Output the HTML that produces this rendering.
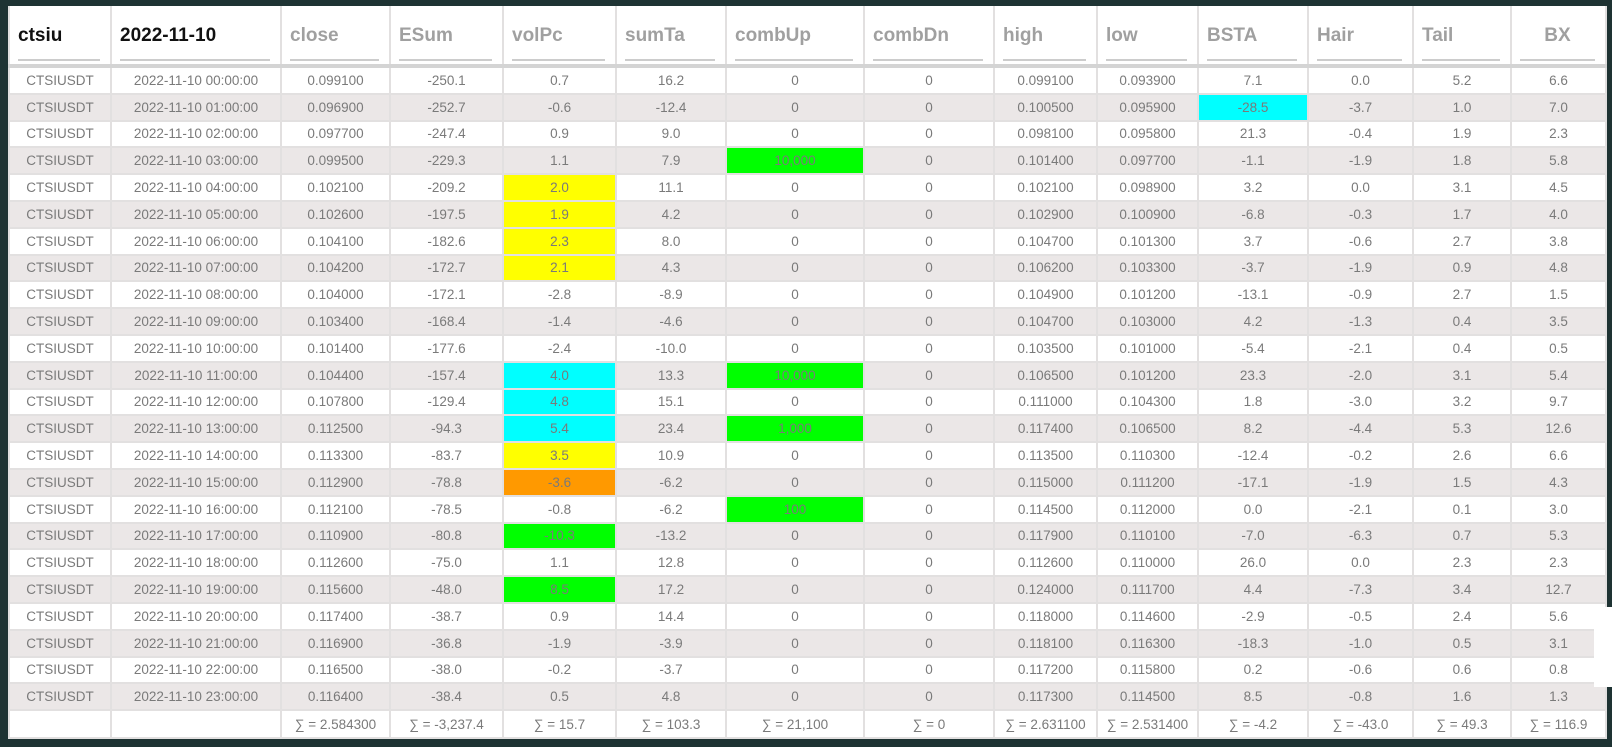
<!DOCTYPE html>
<html><head><meta charset="utf-8"><style>
html,body{margin:0;padding:0;background:#1e3333;width:1612px;height:747px;overflow:hidden;font-family:"Liberation Sans",sans-serif}
.wrap{position:absolute;left:8px;top:6px;width:1597px;background:#fff}
table{border-collapse:collapse;table-layout:fixed;width:1597px}
td,th{border:2px solid #e2e0e0;text-align:center;font-size:13.5px;color:#7a7a7a;padding:0;height:24.8px;white-space:nowrap;overflow:hidden}
th{height:58px;border-bottom:4px solid #d4d4d4;border-top:none;font-size:19px;color:#a0a0a0;font-weight:bold;vertical-align:top}
th div{margin:19px 10px 0 8px;border-bottom:2px solid #ccc;padding-bottom:12px;text-align:left;padding-left:0}
th.b{color:#111}
th.c div{text-align:center}
tbody tr:nth-child(even) td{background:#ebe7e7}
tfoot td{height:26px;background:#fff}
td.y{background:#ffff00!important}td.c{background:#00ffff!important}td.g{background:#00ff00!important}td.o{background:#ff9900!important}
.top{position:absolute;top:0;left:0;width:1612px;height:6px;background:#1e3333}
.patch{position:absolute;left:1594px;top:607px;width:18px;height:80px;background:#fff}
</style></head><body>
<div class="wrap"><table>
<colgroup><col style="width:102px"><col style="width:170px"><col style="width:109px"><col style="width:113px"><col style="width:113px"><col style="width:110px"><col style="width:138px"><col style="width:130px"><col style="width:103px"><col style="width:101px"><col style="width:110px"><col style="width:105px"><col style="width:98px"><col style="width:95px"></colgroup>
<thead><tr><th class="b"><div>ctsiu</div></th><th class="b"><div>2022-11-10</div></th><th><div>close</div></th><th><div>ESum</div></th><th><div>volPc</div></th><th><div>sumTa</div></th><th><div>combUp</div></th><th><div>combDn</div></th><th><div>high</div></th><th><div>low</div></th><th><div>BSTA</div></th><th><div>Hair</div></th><th><div>Tail</div></th><th class="c"><div>BX</div></th></tr></thead>
<tbody>
<tr><td>CTSIUSDT</td><td>2022-11-10 00:00:00</td><td>0.099100</td><td>-250.1</td><td>0.7</td><td>16.2</td><td>0</td><td>0</td><td>0.099100</td><td>0.093900</td><td>7.1</td><td>0.0</td><td>5.2</td><td>6.6</td></tr>
<tr><td>CTSIUSDT</td><td>2022-11-10 01:00:00</td><td>0.096900</td><td>-252.7</td><td>-0.6</td><td>-12.4</td><td>0</td><td>0</td><td>0.100500</td><td>0.095900</td><td class="c">-28.5</td><td>-3.7</td><td>1.0</td><td>7.0</td></tr>
<tr><td>CTSIUSDT</td><td>2022-11-10 02:00:00</td><td>0.097700</td><td>-247.4</td><td>0.9</td><td>9.0</td><td>0</td><td>0</td><td>0.098100</td><td>0.095800</td><td>21.3</td><td>-0.4</td><td>1.9</td><td>2.3</td></tr>
<tr><td>CTSIUSDT</td><td>2022-11-10 03:00:00</td><td>0.099500</td><td>-229.3</td><td>1.1</td><td>7.9</td><td class="g">10,000</td><td>0</td><td>0.101400</td><td>0.097700</td><td>-1.1</td><td>-1.9</td><td>1.8</td><td>5.8</td></tr>
<tr><td>CTSIUSDT</td><td>2022-11-10 04:00:00</td><td>0.102100</td><td>-209.2</td><td class="y">2.0</td><td>11.1</td><td>0</td><td>0</td><td>0.102100</td><td>0.098900</td><td>3.2</td><td>0.0</td><td>3.1</td><td>4.5</td></tr>
<tr><td>CTSIUSDT</td><td>2022-11-10 05:00:00</td><td>0.102600</td><td>-197.5</td><td class="y">1.9</td><td>4.2</td><td>0</td><td>0</td><td>0.102900</td><td>0.100900</td><td>-6.8</td><td>-0.3</td><td>1.7</td><td>4.0</td></tr>
<tr><td>CTSIUSDT</td><td>2022-11-10 06:00:00</td><td>0.104100</td><td>-182.6</td><td class="y">2.3</td><td>8.0</td><td>0</td><td>0</td><td>0.104700</td><td>0.101300</td><td>3.7</td><td>-0.6</td><td>2.7</td><td>3.8</td></tr>
<tr><td>CTSIUSDT</td><td>2022-11-10 07:00:00</td><td>0.104200</td><td>-172.7</td><td class="y">2.1</td><td>4.3</td><td>0</td><td>0</td><td>0.106200</td><td>0.103300</td><td>-3.7</td><td>-1.9</td><td>0.9</td><td>4.8</td></tr>
<tr><td>CTSIUSDT</td><td>2022-11-10 08:00:00</td><td>0.104000</td><td>-172.1</td><td>-2.8</td><td>-8.9</td><td>0</td><td>0</td><td>0.104900</td><td>0.101200</td><td>-13.1</td><td>-0.9</td><td>2.7</td><td>1.5</td></tr>
<tr><td>CTSIUSDT</td><td>2022-11-10 09:00:00</td><td>0.103400</td><td>-168.4</td><td>-1.4</td><td>-4.6</td><td>0</td><td>0</td><td>0.104700</td><td>0.103000</td><td>4.2</td><td>-1.3</td><td>0.4</td><td>3.5</td></tr>
<tr><td>CTSIUSDT</td><td>2022-11-10 10:00:00</td><td>0.101400</td><td>-177.6</td><td>-2.4</td><td>-10.0</td><td>0</td><td>0</td><td>0.103500</td><td>0.101000</td><td>-5.4</td><td>-2.1</td><td>0.4</td><td>0.5</td></tr>
<tr><td>CTSIUSDT</td><td>2022-11-10 11:00:00</td><td>0.104400</td><td>-157.4</td><td class="c">4.0</td><td>13.3</td><td class="g">10,000</td><td>0</td><td>0.106500</td><td>0.101200</td><td>23.3</td><td>-2.0</td><td>3.1</td><td>5.4</td></tr>
<tr><td>CTSIUSDT</td><td>2022-11-10 12:00:00</td><td>0.107800</td><td>-129.4</td><td class="c">4.8</td><td>15.1</td><td>0</td><td>0</td><td>0.111000</td><td>0.104300</td><td>1.8</td><td>-3.0</td><td>3.2</td><td>9.7</td></tr>
<tr><td>CTSIUSDT</td><td>2022-11-10 13:00:00</td><td>0.112500</td><td>-94.3</td><td class="c">5.4</td><td>23.4</td><td class="g">1,000</td><td>0</td><td>0.117400</td><td>0.106500</td><td>8.2</td><td>-4.4</td><td>5.3</td><td>12.6</td></tr>
<tr><td>CTSIUSDT</td><td>2022-11-10 14:00:00</td><td>0.113300</td><td>-83.7</td><td class="y">3.5</td><td>10.9</td><td>0</td><td>0</td><td>0.113500</td><td>0.110300</td><td>-12.4</td><td>-0.2</td><td>2.6</td><td>6.6</td></tr>
<tr><td>CTSIUSDT</td><td>2022-11-10 15:00:00</td><td>0.112900</td><td>-78.8</td><td class="o">-3.6</td><td>-6.2</td><td>0</td><td>0</td><td>0.115000</td><td>0.111200</td><td>-17.1</td><td>-1.9</td><td>1.5</td><td>4.3</td></tr>
<tr><td>CTSIUSDT</td><td>2022-11-10 16:00:00</td><td>0.112100</td><td>-78.5</td><td>-0.8</td><td>-6.2</td><td class="g">100</td><td>0</td><td>0.114500</td><td>0.112000</td><td>0.0</td><td>-2.1</td><td>0.1</td><td>3.0</td></tr>
<tr><td>CTSIUSDT</td><td>2022-11-10 17:00:00</td><td>0.110900</td><td>-80.8</td><td class="g">-10.3</td><td>-13.2</td><td>0</td><td>0</td><td>0.117900</td><td>0.110100</td><td>-7.0</td><td>-6.3</td><td>0.7</td><td>5.3</td></tr>
<tr><td>CTSIUSDT</td><td>2022-11-10 18:00:00</td><td>0.112600</td><td>-75.0</td><td>1.1</td><td>12.8</td><td>0</td><td>0</td><td>0.112600</td><td>0.110000</td><td>26.0</td><td>0.0</td><td>2.3</td><td>2.3</td></tr>
<tr><td>CTSIUSDT</td><td>2022-11-10 19:00:00</td><td>0.115600</td><td>-48.0</td><td class="g">8.5</td><td>17.2</td><td>0</td><td>0</td><td>0.124000</td><td>0.111700</td><td>4.4</td><td>-7.3</td><td>3.4</td><td>12.7</td></tr>
<tr><td>CTSIUSDT</td><td>2022-11-10 20:00:00</td><td>0.117400</td><td>-38.7</td><td>0.9</td><td>14.4</td><td>0</td><td>0</td><td>0.118000</td><td>0.114600</td><td>-2.9</td><td>-0.5</td><td>2.4</td><td>5.6</td></tr>
<tr><td>CTSIUSDT</td><td>2022-11-10 21:00:00</td><td>0.116900</td><td>-36.8</td><td>-1.9</td><td>-3.9</td><td>0</td><td>0</td><td>0.118100</td><td>0.116300</td><td>-18.3</td><td>-1.0</td><td>0.5</td><td>3.1</td></tr>
<tr><td>CTSIUSDT</td><td>2022-11-10 22:00:00</td><td>0.116500</td><td>-38.0</td><td>-0.2</td><td>-3.7</td><td>0</td><td>0</td><td>0.117200</td><td>0.115800</td><td>0.2</td><td>-0.6</td><td>0.6</td><td>0.8</td></tr>
<tr><td>CTSIUSDT</td><td>2022-11-10 23:00:00</td><td>0.116400</td><td>-38.4</td><td>0.5</td><td>4.8</td><td>0</td><td>0</td><td>0.117300</td><td>0.114500</td><td>8.5</td><td>-0.8</td><td>1.6</td><td>1.3</td></tr>
</tbody>
<tfoot><tr><td></td><td></td><td>∑ = 2.584300</td><td>∑ = -3,237.4</td><td>∑ = 15.7</td><td>∑ = 103.3</td><td>∑ = 21,100</td><td>∑ = 0</td><td>∑ = 2.631100</td><td>∑ = 2.531400</td><td>∑ = -4.2</td><td>∑ = -43.0</td><td>∑ = 49.3</td><td>∑ = 116.9</td></tr></tfoot>
</table></div>
<div class="top"></div>
<div class="patch"></div>
</body></html>
